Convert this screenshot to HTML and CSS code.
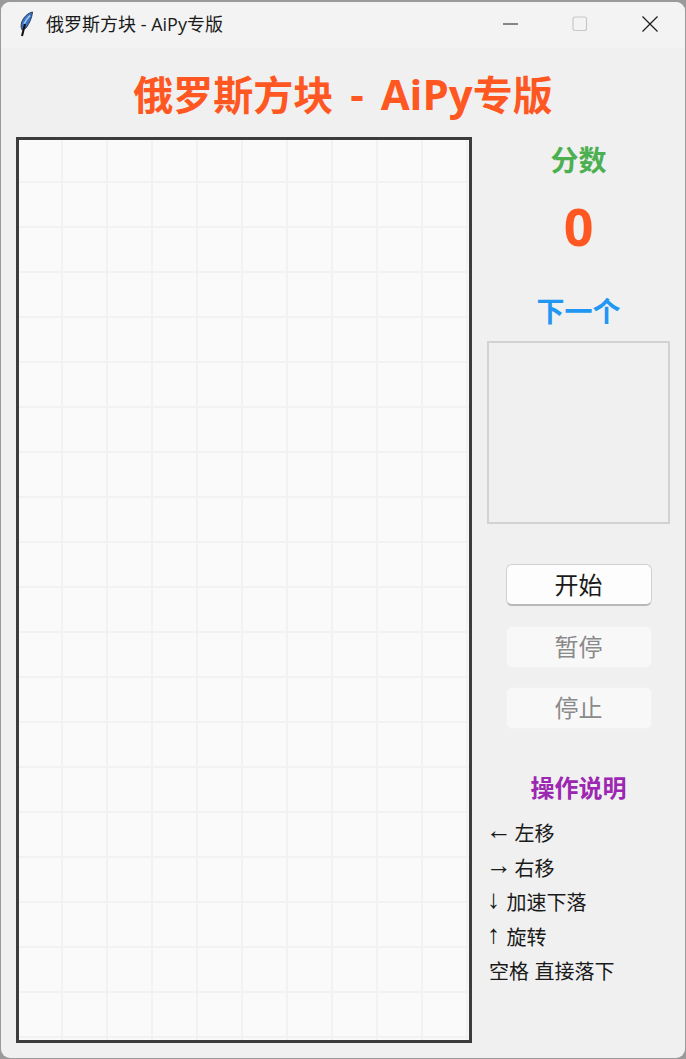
FILE: index.html
```html
<!DOCTYPE html>
<html lang="zh-CN">
<head>
    <meta charset="UTF-8">
    <title>俄罗斯方块 - AiPy专版</title>
    <link rel="stylesheet" href="styles.css">
</head>
<body>
    <div class="window">
        <div class="titlebar">
            <svg class="app-icon" width="18" height="26" viewBox="0 0 18 26">
                <path d="M15.500 1C11 2 6.500 6 4.800 11c-1 3-1 6 .4 8l3.800-2c3-4 6-10 6.500-16z" fill="#3a76c8" stroke="#2b3a55" stroke-width="1"/>
                <path d="M13 4.500C10 7.500 8 10.500 7 13" fill="none" stroke="#a9cdf0" stroke-width="1.500"/>
                <path d="M8 13L5 25" fill="none" stroke="#111" stroke-width="2"/>
            </svg>
            <span class="window-title">俄罗斯方块 - AiPy专版</span>
            <div class="window-controls">
                <svg class="ctl" width="16" height="16" viewBox="0 0 16 16"><path d="M1 8H16" stroke="#1a1a1a" stroke-width="1"/></svg>
                <svg class="ctl" width="16" height="16" viewBox="0 0 16 16"><rect x="1" y="1" width="13.500" height="13.500" rx="2" fill="none" stroke="#c8c8c8" stroke-width="1.200"/></svg>
                <svg class="ctl" width="16" height="16" viewBox="0 0 16 16"><path d="M.5.500L15.500 15.500M15.500.500L.5 15.500" stroke="#1a1a1a" stroke-width="1.200"/></svg>
            </div>
        </div>

        <h1 class="game-title">俄罗斯方块<span class="latin"> - AiPy</span>专版</h1>

        <div class="game">
            <div class="board"></div>

            <div class="side">
                <div class="score-label">分数</div>
                <div class="score">0</div>
                <div class="next-label">下一个</div>
                <div class="next-box"></div>

                <div class="buttons">
                    <button class="btn">开始</button>
                    <button class="btn" disabled>暂停</button>
                    <button class="btn" disabled>停止</button>
                </div>

                <div class="help-label">操作说明</div>
                <div class="help">
                    <div><span class="arrow">←</span> 左移</div>
                    <div><span class="arrow">→</span> 右移</div>
                    <div><span class="arrow-v">↓</span> 加速下落</div>
                    <div><span class="arrow-v">↑</span> 旋转</div>
                    <div>空格 直接落下</div>
                </div>
            </div>
        </div>
    </div>
</body>
</html>
```

FILE: styles.css
```css
html, body {
    margin: 0;
    height: 100%;
    overflow: hidden;
    background: #9a9a9a;
}
body {
    font-family: "Open Sans", "Noto Sans CJK SC", sans-serif;
    padding-top: 2px;
    box-sizing: border-box;
}
.window {
    height: 1056px;
    margin-left: 1px;
    margin-right: 1px;
    background: #f0f0f0;
    border-radius: 9px;
    overflow: hidden;
}
.titlebar {
    height: 44px;
    padding: 0 0 2px 16px;
    background: #f3f3f3;
    display: flex;
    align-items: center;
}
.app-icon {
    margin-right: 11px;
}
.window-title {
    margin-bottom: 2px;
    font-size: 18px;
    color: #1a1a1a;
}
.window-controls {
    margin-left: auto;
    display: flex;
    gap: 54px;
    padding-right: 27px;
}
.game-title {
    margin: 16px 0 0;
    height: 73px;
    font-size: 40px;
    line-height: 60px;
    font-weight: 700;
    color: #ff5722;
    text-align: center;
}
.latin {
    font-size: 42px;
    word-spacing: 6px;
}
.game {
    display: flex;
    padding-left: 15px;
}
.board {
    width: 450px;
    height: 900px;
    border: 3px solid #3c3c3c;
    background-color: #fafafa;
    background-image:
        linear-gradient(to right, transparent 42px, #f2f2f2 42px, #f2f2f2 44px, transparent 44px),
        linear-gradient(to bottom, transparent 41px, #f2f2f2 41px, #f2f2f2 43px, transparent 43px);
    background-size: 45px 45px;
}
.side {
    width: 183px;
    margin-left: 15px;
    display: flex;
    flex-direction: column;
    align-items: center;
}
.score-label {
    margin-top: 2px;
    font-size: 28px;
    line-height: 42px;
    font-weight: 700;
    color: #4caf50;
}
.score {
    font-size: 52px;
    line-height: 70px;
    font-weight: 700;
    color: #ff5722;
    margin-top: 10px;
}
.next-label {
    margin-top: 29px;
    font-size: 28px;
    line-height: 42px;
    font-weight: 700;
    color: #2196f3;
}
.next-box {
    width: 179px;
    height: 179px;
    margin-top: 9px;
    border: 2px solid #d2d2d2;
}
.buttons {
    margin-top: 40px;
    display: flex;
    flex-direction: column;
    gap: 19.500px;
}
.btn {
    width: 146px;
    height: 42px;
    padding: 0;
    font-family: inherit;
    font-size: 24px;
    line-height: 40px;
    color: #1a1a1a;
    background: #fdfdfd;
    border: 1px solid #d0d0d0;
    border-bottom: 2px solid #b8b8b8;
    border-radius: 6px;
}
.btn:disabled {
    color: #8a8a8a;
    background: #f8f8f8;
    border: 1px solid #f2f2f2;
}
.help-label {
    margin-top: 41px;
    font-size: 24px;
    line-height: 36px;
    font-weight: 700;
    color: #9c27b0;
}
.help {
    align-self: flex-start;
    margin-top: 11px;
    margin-left: 2px;
    font-family: "Liberation Sans", "Noto Sans CJK SC", sans-serif;
    font-size: 20px;
    line-height: 34.500px;
    color: #1a1a1a;
}
.arrow {
    margin: 0 -3px;
    font-size: 26px;
    line-height: 0;
    vertical-align: 2px;
}
.arrow-v {
    margin: 0 1px 0 -2px;
    font-size: 26px;
    line-height: 0;
    vertical-align: 2px;
}
```
